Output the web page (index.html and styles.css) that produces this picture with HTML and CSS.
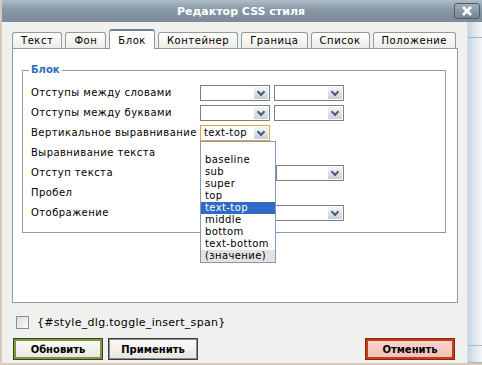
FILE: index.html
```html
<!DOCTYPE html>
<html lang="ru">
<head>
    <meta charset="UTF-8">
    <title>Редактор CSS стиля</title>
    <link rel="stylesheet" href="styles.css">
</head>
<body>
<div class="window">
    <div class="titlebar">
        <span class="title">Редактор CSS стиля</span>
        <span class="close-btn">
            <svg width="12" height="10" viewBox="0 0 12 10"><path d="M2 1 L10 9 M10 1 L2 9" stroke="#fff" stroke-width="2.6"/></svg>
        </span>
    </div>
    <div class="body">
        <div class="main">
            <div class="tabs">
                <span class="tab">Текст</span>
                <span class="tab">Фон</span>
                <span class="tab active">Блок</span>
                <span class="tab">Контейнер</span>
                <span class="tab">Граница</span>
                <span class="tab">Список</span>
                <span class="tab">Положение</span>
            </div>
            <div class="panel">
                <fieldset class="group">
                    <legend>Блок</legend>
                    <div class="rows">
                        <label>Отступы между словами</label>
                        <span class="select"><span class="value"></span><span class="arrow"></span></span>
                        <span class="select"><span class="value"></span><span class="arrow"></span></span>

                        <label>Отступы между буквами</label>
                        <span class="select"><span class="value"></span><span class="arrow"></span></span>
                        <span class="select"><span class="value"></span><span class="arrow"></span></span>

                        <label>Вертикальное выравнивание</label>
                        <span class="select focused">
                            <span class="value">text-top</span><span class="arrow"></span>
                            <ul class="dropdown">
                                <li>&nbsp;</li>
                                <li>baseline</li>
                                <li>sub</li>
                                <li>super</li>
                                <li>top</li>
                                <li class="selected">text-top</li>
                                <li>middle</li>
                                <li>bottom</li>
                                <li>text-bottom</li>
                                <li class="hover">(значение)</li>
                            </ul>
                        </span>
                        <span></span>

                        <label>Выравнивание текста</label>
                        <span class="select"><span class="value"></span><span class="arrow"></span></span>
                        <span></span>

                        <label>Отступ текста</label>
                        <span class="select"><span class="value"></span><span class="arrow"></span></span>
                        <span class="select shifted"><span class="value"></span><span class="arrow"></span></span>

                        <label>Пробел</label>
                        <span class="select"><span class="value"></span><span class="arrow"></span></span>
                        <span></span>

                        <label>Отображение</label>
                        <span class="select wide"><span class="value"></span><span class="arrow"></span></span>
                    </div>
                </fieldset>
            </div>
            <div class="option">
                <span class="checkbox"></span>
                <span>{#style_dlg.toggle_insert_span}</span>
            </div>
            <div class="buttons">
                <button class="btn update">Обновить</button>
                <button class="btn">Применить</button>
                <button class="btn cancel">Отменить</button>
            </div>
        </div>
        <div class="scroll">
            <span class="scroll-top"></span>
            <span class="scroll-mid"></span>
            <span class="scroll-bottom"></span>
        </div>
    </div>
</div>
</body>
</html>
```

FILE: styles.css
```css
body {
    margin: 0;
    font-family: "DejaVu Sans", Verdana, sans-serif;
    font-size: 10px;
    color: #000;
    background: #f0f0ee;
}

.window {
    width: 480px;
    height: 363px;
    border-left: 2px solid #d6c8ba;
    border-bottom: 2px solid #d6c8ba;
    background: #f0f0ee;
    overflow: hidden;
}

.titlebar {
    height: 22px;
    margin-left: -2px;
    width: 482px;
    background: linear-gradient(#b0bcc6, #8797a5 45%, #7a8b99);
    position: relative;
    display: flex;
    align-items: center;
    justify-content: center;
}

.title {
    color: #fff;
    font-weight: bold;
    font-size: 11px;
}

.close-btn {
    position: absolute;
    right: 2px;
    top: 3px;
    width: 24px;
    height: 14px;
    border: 1px solid #4e5d69;
    border-radius: 3px;
    background: linear-gradient(#a2afba, #74858f);
    display: flex;
    align-items: center;
    justify-content: center;
}

.body {
    display: flex;
    height: 341px;
}

.main {
    width: 447px;
    padding: 8px 8px 0 10px;
}

.tabs {
    display: flex;
    align-items: flex-end;
    gap: 3px;
    height: 18px;
}

.tab {
    height: 15px;
    line-height: 15px;
    padding: 0 8px;
    border: 1px solid #919b9c;
    border-bottom: none;
    border-radius: 3px 3px 0 0;
    background: linear-gradient(#fff, #ecebe6);
    letter-spacing: 0.55px;
}

.tab.active {
    height: 18px;
    line-height: 19px;
    background: #fff;
    border-top: 2px solid #6c8098;
    position: relative;
    z-index: 1;
    margin-bottom: -1px;
}

.panel {
    height: 238px;
    border: 1px solid #919b9c;
    background: #fff;
    padding: 15px 11px 0 9px;
}

.group {
    margin: 0;
    padding: 9px 0 11px 8px;
    border: 1px solid #919b9c;
}

.group legend {
    color: #2d6db4;
    font-weight: bold;
    padding: 0 2px;
    margin-left: -2px;
    line-height: 12px;
}

.rows {
    display: grid;
    grid-template-columns: 165px 70px 70px;
    grid-auto-rows: 16px;
    column-gap: 4px;
    row-gap: 4px;
}

.rows label {
    line-height: 16px;
    letter-spacing: 0.45px;
    white-space: nowrap;
}

.select {
    display: flex;
    border: 1px solid #7f7f7f;
    background: #fff;
    position: relative;
}

.select.wide {
    grid-column: 2 / 4;
}

.select.shifted {
    margin-left: 2px;
}

.select.focused {
    border-color: #e3a53a;
}

.select .value {
    flex: 1;
    line-height: 14px;
    padding-left: 3px;
    letter-spacing: 0.4px;
}

.arrow {
    width: 14px;
    margin: 1px;
    background: linear-gradient(#f4f6f8, #c9d0d8) no-repeat;
    position: relative;
}

.arrow::after {
    content: "";
    position: absolute;
    left: 4px;
    top: 2px;
    width: 4px;
    height: 4px;
    border-right: 2px solid #4d5d75;
    border-bottom: 2px solid #4d5d75;
    transform: rotate(45deg);
}

.dropdown {
    position: absolute;
    left: -1px;
    top: 15px;
    width: 74px;
    margin: 0;
    padding: 0;
    list-style: none;
    background: #fff;
    border: 1px solid #7f9db9;
    z-index: 2;
}

.dropdown li {
    height: 12px;
    line-height: 12px;
    padding-left: 4px;
    letter-spacing: 0.4px;
    white-space: nowrap;
}

.dropdown li.selected {
    background: #316ac5;
    color: #fff;
}

.dropdown li.hover {
    background: #e3e3e3;
}

.option {
    display: flex;
    align-items: center;
    gap: 8px;
    margin: 13px 0 0 4px;
    height: 13px;
    font-size: 11px;
    letter-spacing: 0.3px;
}

.checkbox {
    width: 11px;
    height: 11px;
    border: 1px solid #8f8f8f;
    background: linear-gradient(135deg, #dcdcd8, #fbfbfa);
}

.buttons {
    display: flex;
    gap: 5px;
    margin: 9px 3px 0 1px;
}

.btn {
    width: 90px;
    height: 22px;
    padding: 0;
    font-family: "DejaVu Sans", Verdana, sans-serif;
    font-size: 10px;
    font-weight: bold;
    border: 1px solid #3c3c3c;
    box-shadow: inset 0 0 0 1px #8c8c8c;
    background: linear-gradient(#fbfbf9, #e6e6e0);
    color: #000;
}

.btn.update {
    box-shadow: inset 0 0 0 2px #7d9a2e;
}

.btn.cancel {
    margin-left: auto;
    border-color: #7c2a10;
    box-shadow: inset 0 0 0 2px #cc3a14;
    background: linear-gradient(#f8d6cf, #f0c0b6);
}

.scroll {
    width: 14px;
    margin-left: 1px;
    display: flex;
    flex-direction: column;
    border-left: 1px solid #d8dde2;
}

.scroll span {
    background: linear-gradient(90deg, #c6d2de, #dfe6ee 50%, #f4f6f8);
    border-bottom: 1px solid #a9b6c3;
}

.scroll-top {
    height: 15px;
}

.scroll-mid {
    flex: 1;
}

.scroll-bottom {
    height: 16px;
}
```
